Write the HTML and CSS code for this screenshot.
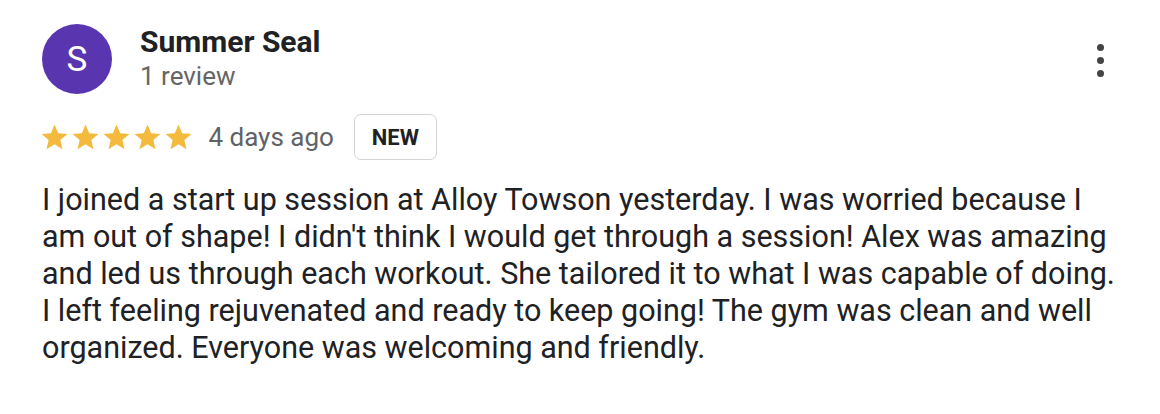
FILE: index.html
```html
<!DOCTYPE html>
<html lang="en">
<head>
<meta charset="utf-8">
<link rel="stylesheet" href="styles.css">
</head>
<body>
<div class="review">
  <div class="header">
    <div class="avatar">S</div>
    <div class="who">
      <div class="name">Summer Seal</div>
      <div class="count">1 review</div>
    </div>
    <div class="menu" aria-label="More options">
      <span class="dot"></span><span class="dot"></span><span class="dot"></span>
    </div>
  </div>
  <div class="meta">
    <div class="stars">
      <svg viewBox="0 0 24 24" class="star"><path d="M12 17.27L18.18 21l-1.64-7.03L22 9.24l-7.19-.61L12 2 9.19 8.63 2 9.24l5.46 4.73L5.82 21z"/></svg>
      <svg viewBox="0 0 24 24" class="star"><path d="M12 17.27L18.18 21l-1.64-7.03L22 9.24l-7.19-.61L12 2 9.19 8.63 2 9.24l5.46 4.73L5.82 21z"/></svg>
      <svg viewBox="0 0 24 24" class="star"><path d="M12 17.27L18.18 21l-1.64-7.03L22 9.24l-7.19-.61L12 2 9.19 8.63 2 9.24l5.46 4.73L5.82 21z"/></svg>
      <svg viewBox="0 0 24 24" class="star"><path d="M12 17.27L18.18 21l-1.64-7.03L22 9.24l-7.19-.61L12 2 9.19 8.63 2 9.24l5.46 4.73L5.82 21z"/></svg>
      <svg viewBox="0 0 24 24" class="star"><path d="M12 17.27L18.18 21l-1.64-7.03L22 9.24l-7.19-.61L12 2 9.19 8.63 2 9.24l5.46 4.73L5.82 21z"/></svg>
    </div>
    <span class="date">4 days ago</span>
    <span class="badge">NEW</span>
  </div>
  <p class="text">I joined a start up session at Alloy Towson yesterday. I was worried because I<br>am out of shape! I didn't think I would get through a session! Alex was amazing<br>and led us through each workout. She tailored it to what I was capable of doing.<br>I left feeling rejuvenated and ready to keep going! The gym was clean and well<br>organized. Everyone was welcoming and friendly.</p>
</div>
</body>
</html>
```

FILE: styles.css
```css
html, body {
  margin: 0;
  padding: 0;
  background: #ffffff;
}
body {
  font-family: Roboto, "Liberation Sans", Arial, sans-serif;
  color: #202124;
}
.review {
  padding: 24px 0 0 42px;
  width: 1090px;
}
.header {
  display: flex;
  align-items: flex-start;
}
.avatar {
  width: 70px;
  height: 70px;
  border-radius: 50%;
  background: #5a35b0;
  color: #ffffff;
  font-size: 35px;
  display: flex;
  align-items: center;
  justify-content: center;
  flex: none;
}
.who {
  margin-left: 28px;
  padding-top: 0;
  flex: 1;
}
.name {
  font-size: 30px;
  font-weight: 700;
  line-height: 35px;
  color: #202124;
}
.count {
  font-size: 26px;
  line-height: 35px;
  color: #666666;
}
.menu {
  display: flex;
  flex-direction: column;
  align-items: center;
  gap: 6px;
  margin-top: 20px;
  margin-right: 20px;
  width: 24px;
}
.dot {
  width: 7px;
  height: 7px;
  border-radius: 50%;
  background: #444;
}
.meta {
  display: flex;
  align-items: center;
  margin-top: 20px;
  height: 46px;
}
.stars {
  display: flex;
  margin-left: -2.6px;
}
.star {
  width: 31px;
  height: 31px;
  fill: #f3ba3e;
}
.date {
  margin-left: 14px;
  font-size: 26px;
  color: #5f6368;
}
.badge {
  margin-left: 20px;
  height: 44px;
  padding: 0 17px;
  border: 1px solid #d4d4d4;
  border-radius: 7px;
  font-size: 22px;
  font-weight: 700;
  display: flex;
  align-items: center;
  color: #202124;
}
.text {
  margin: 21px 0 0 0;
  font-size: 30.5px;
  line-height: 37px;
  white-space: nowrap;
  color: #202124;
}
```
